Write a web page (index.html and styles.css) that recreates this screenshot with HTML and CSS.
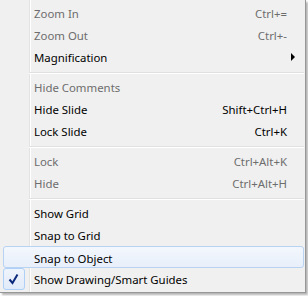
FILE: index.html
```html
<html>
    <head>
        <link rel="stylesheet" href="styles.css">
    </head>
    <body>
        <div class="menu">
            <div class="menuItem disabled"><span class="check"></span><span class="label">Zoom In</span><span class="key">Ctrl+=</span><span class="more"></span></div>
            <div class="menuItem disabled"><span class="check"></span><span class="label">Zoom Out</span><span class="key">Ctrl+-</span><span class="more"></span></div>
            <div class="menuItem"><span class="check"></span><span class="label">Magnification</span><span class="key"></span><span class="more"><i class="arrow"></i></span></div>
            <div class="menuSep"></div>
            <div class="menuItem disabled"><span class="check"></span><span class="label">Hide Comments</span><span class="key"></span><span class="more"></span></div>
            <div class="menuItem"><span class="check"></span><span class="label">Hide Slide</span><span class="key">Shift+Ctrl+H</span><span class="more"></span></div>
            <div class="menuItem"><span class="check"></span><span class="label">Lock Slide</span><span class="key">Ctrl+K</span><span class="more"></span></div>
            <div class="menuSep"></div>
            <div class="menuItem disabled"><span class="check"></span><span class="label">Lock</span><span class="key">Ctrl+Alt+K</span><span class="more"></span></div>
            <div class="menuItem disabled"><span class="check"></span><span class="label">Hide</span><span class="key">Ctrl+Alt+H</span><span class="more"></span></div>
            <div class="menuSep"></div>
            <div class="menuItem"><span class="check"></span><span class="label">Show Grid</span><span class="key"></span><span class="more"></span></div>
            <div class="menuItem"><span class="check"></span><span class="label">Snap to Grid</span><span class="key"></span><span class="more"></span></div>
            <div class="menuItem hover"><span class="check"></span><span class="label">Snap to Object</span><span class="key"></span><span class="more"></span></div>
            <div class="menuItem"><span class="check checked"><svg width="20" height="20" viewBox="0 0 20 20"><path d="M5.5 10.5 L8.5 14 L13.5 5.5" fill="none" stroke="#0c2a7c" stroke-width="2"/></svg></span><span class="label">Show Drawing/Smart Guides</span><span class="key"></span><span class="more"></span></div>
        </div>
    </body>
</html>
```

FILE: styles.css
```css
body {
  margin: 0;
  background: #ffffff;
  font-family: "Noto Sans", "Open Sans", sans-serif;
  font-size: 11.4px;
}
.menu {
  width: 301px;
  padding: 2px 1px 2px 3px;
  border-right: 1px solid #979797;
  border-bottom: 1px solid #979797;
  background: linear-gradient(to right, transparent 29px, #e2e3e3 29px, #e2e3e3 30px, #ffffff 30px, #ffffff 31px, transparent 31px), #f0f0f0;
  box-shadow: 2px 2px 2px rgba(0, 0, 0, 0.3);
}
.menuItem {
  display: grid;
  grid-template-columns: 22px 1fr auto 17px;
  align-items: center;
  height: 22px;
  color: #000000;
  box-sizing: border-box;
}
.menuItem.disabled {
  color: #6d6d6d;
}
.menuItem.hover {
  border: 1px solid #b8d2f2;
  border-radius: 3px;
  background: linear-gradient(to bottom, #f3f7fd, #e8effa);
}
.menuItem.hover .label {
  padding-left: 8px;
}
.label {
  padding-left: 9px;
  white-space: nowrap;
}
.key {
  text-align: right;
}
.more {
  display: flex;
  align-items: center;
  height: 22px;
}
.arrow {
  margin-left: 4px;
  width: 0;
  height: 0;
  border-left: 4px solid #000000;
  border-top: 4px solid transparent;
  border-bottom: 4px solid transparent;
}
.check {
  width: 22px;
  height: 22px;
  box-sizing: border-box;
  display: flex;
  align-items: center;
  justify-content: center;
}
.check.checked {
  border: 1px solid #aecff7;
  border-radius: 3px;
  background: linear-gradient(to bottom, #eef4fc, #e2ebf9);
}
.menuSep {
  height: 8px;
  margin-left: 26px;
  background: linear-gradient(to bottom, transparent 4px, #e0e0e0 4px, #e0e0e0 5px, #ffffff 5px, #ffffff 6px, transparent 6px);
}
```
